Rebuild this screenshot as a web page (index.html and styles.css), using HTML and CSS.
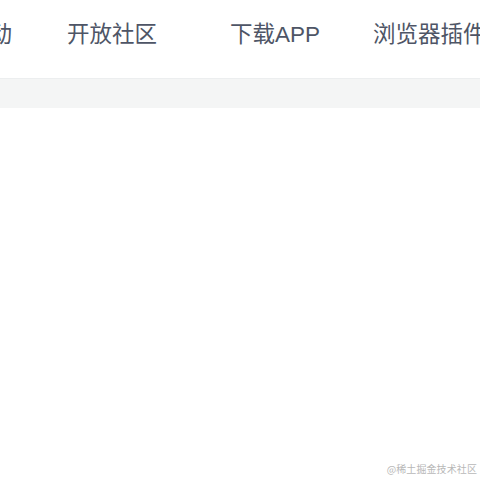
FILE: index.html
```html
<!DOCTYPE html>
<html lang="zh">
<head>
<meta charset="utf-8">
<link rel="stylesheet" href="styles.css">
</head>
<body>
<header class="topbar">
  <nav class="nav">
    <span class="nav-item first">活动</span>
    <span class="nav-item">开放社区</span>
    <span class="nav-item wide">下载APP</span>
    <span class="nav-item">浏览器插件</span>
  </nav>
</header>
<div class="band"></div>
<main class="content"></main>
<div class="watermark">@稀土掘金技术社区</div>
</body>
</html>
```
FILE: styles.css
```css
html, body {
  margin: 0;
  padding: 0;
  background: #ffffff;
  width: 480px;
  height: 480px;
  overflow: hidden;
  position: relative;
}
.topbar {
  height: 79px;
  box-sizing: border-box;
  border-bottom: 1px solid #eceeef;
  background: #ffffff;
  overflow: hidden;
}
.nav {
  display: flex;
  white-space: nowrap;
  padding-top: 19px;
  margin-left: -33px;
  font-family: "Liberation Sans", "Noto Sans CJK SC", sans-serif;
  font-size: 22.5px;
  line-height: 32px;
  color: #4e5566;
}
.nav-item {
  margin-right: 55px;
  flex: none;
}
.nav-item.wide {
  margin-right: 53px;
}
.nav-item.first + .nav-item {
  margin-right: 73px;
}
.band {
  height: 29px;
  background: #f4f5f5;
}
.content {
  height: 372px;
}
.watermark {
  position: absolute;
  right: 3px;
  top: 462px;
  font-family: "Noto Sans CJK SC", sans-serif;
  font-size: 10px;
  line-height: 14px;
  color: #b8b8b8;
  letter-spacing: 0.1px;
}
```
